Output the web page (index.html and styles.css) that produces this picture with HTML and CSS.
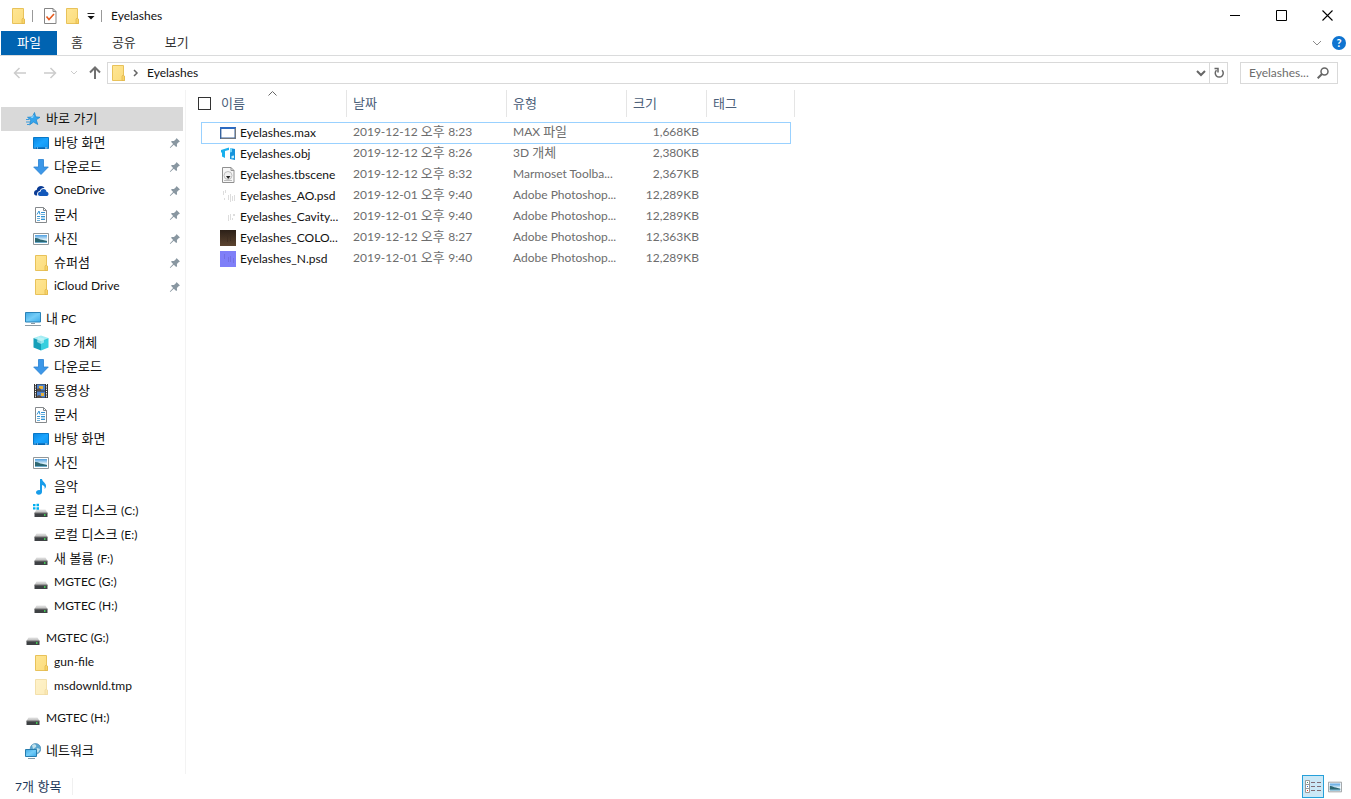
FILE: index.html
```html
<!DOCTYPE html>
<html lang="ko">
<head>
<meta charset="utf-8">
<title>Eyelashes</title>
<link rel="stylesheet" href="styles.css">
</head>
<body>
<svg class="defs" aria-hidden="true">
  <defs>
    <linearGradient id="g-folder" x1="0" y1="0" x2="1" y2="1"><stop offset="0" stop-color="#ffe694"/><stop offset="1" stop-color="#fbdc7c"/></linearGradient>
    <linearGradient id="g-screen" x1="0" y1="0" x2="1" y2="1"><stop offset="0" stop-color="#0c86e0"/><stop offset=".5" stop-color="#1aa5ff"/><stop offset="1" stop-color="#0f93ee"/></linearGradient>
    <linearGradient id="g-pc" x1="0" y1="0" x2="1" y2="1"><stop offset="0" stop-color="#3fa9e4"/><stop offset=".5" stop-color="#74cdf8"/><stop offset="1" stop-color="#3cabea"/></linearGradient>
    <linearGradient id="g-drive" x1="0" y1="0" x2="0" y2="1"><stop offset="0" stop-color="#e6e6e6"/><stop offset="1" stop-color="#b4b4b4"/></linearGradient>
    <linearGradient id="g-brown" x1="0" y1="0" x2="0" y2="1"><stop offset="0" stop-color="#2c2018"/><stop offset="1" stop-color="#5c4430"/></linearGradient>
    <linearGradient id="g-photo" x1="0" y1="0" x2="0" y2="1"><stop offset="0" stop-color="#4f9fe0"/><stop offset=".6" stop-color="#e2f3fa"/><stop offset="1" stop-color="#8fc3dc"/></linearGradient>
  </defs>
  <symbol id="folder" viewBox="0 0 16 16"><path d="M2.500.5h11v10l1 1v4h-12z" fill="url(#g-folder)" stroke="#e8c25a"/><path d="M12 15.500v-4.500l1-1 1.500 1v4.500z" fill="#f8d468" stroke="#dfb54a" stroke-width=".7"/></symbol>
  <symbol id="star" viewBox="0 0 16 16"><path d="M9.500 1.500l1.200 4.300 4.300.5-3.800 2.500 1.600 4.700-4.300-2.400-4 2.800 1.300-4.700L2.500 6.300l4.800-.4z" fill="#35a4ec" stroke="#1683cb" stroke-width=".7"/><path d="M1 8.500h3M1 11h4M2 13.500h2" stroke="#3b9cdc" stroke-width="1"/><path d="M9.200 3.500L8 7 5.500 7z" fill="#8bd4fc"/></symbol>
  <symbol id="desktop" viewBox="0 0 16 16"><path d="M.5 2.500h15v11H.5z" fill="url(#g-screen)" stroke="#0878c8"/><path d="M1 13h14" stroke="#05549a"/><path d="M1.500 13h1M4 13h1M12 13h2.500" stroke="#bfe7ff"/></symbol>
  <symbol id="download" viewBox="0 0 16 16"><path d="M5.500.5h5v7.500h4.800L8 15.500.7 8h4.800z" fill="#3c97e8" stroke="#2680d2" stroke-width=".8"/></symbol>
  <symbol id="onedrive" viewBox="0 0 16 16"><path d="M1 10c0-2 1.400-3 2.700-3C4 4.500 5.800 3 8 3c1.700 0 2.900.8 3.500 2-2.700-.3-4.500 1.200-4.800 3.100C4.500 8.400 3.800 10 4.200 12.500H3C1.800 12.500 1 11.500 1 10z" fill="#0a3b94"/><path d="M5 11c0-1.600 1.200-2.400 2.500-2.300C7.800 6.700 9.100 6 10.500 6c1.600 0 2.700 1 3 2.700 1.300.2 2 1 2 2.200 0 1.300-1 2.100-2.100 2.100H7c-1.200 0-2-.9-2-2z" fill="#1358ba"/></symbol>
  <symbol id="document" viewBox="0 0 16 16"><path d="M2.500.5h8l3 3v12h-11z" fill="#fff" stroke="#85898c"/><path d="M10.500.5v3h3" fill="none" stroke="#85898c"/><path d="M4 7.500l2-3.500 1 3.500M8 5.500h4M4 9.500h3M8 9.500h4M8 12.500h4" stroke="#3495d5" fill="none"/><path d="M4 11.500h3M8 7.500h4M4 13.500h3M8 11h4" stroke="#71b2da" fill="none"/></symbol>
  <symbol id="picture" viewBox="0 0 16 16"><path d="M.5 2.500h15v11H.5z" fill="#fff" stroke="#91979a"/><path d="M2 4h12v8H2z" fill="url(#g-photo)"/><path d="M2 7c3-.5 4 1.500 7 1.700L14 10v1H2z" fill="#2c6772"/><path d="M2 11h12v1H2z" fill="#6caccd"/></symbol>
  <symbol id="pc" viewBox="0 0 16 16"><path d="M.5 1.500h15v9.500H.5z" fill="url(#g-pc)" stroke="#2b83b8"/><path d="M6 12.500h4M0 14.500h16" stroke="#8c9aa4"/></symbol>
  <symbol id="cube" viewBox="0 0 16 16"><path d="M8 .5l7.500 2.500L8 6 .5 3z" fill="#a5edf4"/><path d="M.5 3L8 6v9.500l-7.500-3z" fill="#16a0b9"/><path d="M8 6l7.500-3v9.500l-7.500 3z" fill="#36cfdf"/><path d="M5 2l6 1.500v4L8 9 4 7z" fill="#c8f5f8" opacity=".65"/></symbol>
  <symbol id="video" viewBox="0 0 16 16"><path d="M1 1h14v14H1z" fill="#333"/><path d="M4 1.500h8v6H4zM4 8.500h8v6H4z" fill="#4f83cc"/><path d="M6 3h4v3H6zM8 10h3v3H8z" fill="#e8b23a"/><path d="M4 6l3-1 1 2v1H4zM4 13l2-1 3 2v1H4z" fill="#574d45"/><path d="M2.500 1v14M13.500 1v14" stroke="#fff" stroke-dasharray="1.300 1"/></symbol>
  <symbol id="music" viewBox="0 0 16 16"><path d="M7 0h2c.3 3 4.500 4 4 7.500-.2 1.300-.8 2-1.400 2.600.6-2.500-.6-3.600-2.600-4V13c0 1.500-1.400 2.700-3.200 2.700-1.700 0-2.800-1-2.800-2.200 0-1.600 2-2.800 4-2.300z" fill="#189ce9"/></symbol>
  <symbol id="drive" viewBox="0 0 16 16"><path d="M3.500 6.500h9l2 3.500h-13z" fill="url(#g-drive)"/><path d="M1.500 10h13v4h-13z" fill="#3e4144"/><path d="M1.500 10h13" stroke="#777"/><path d="M11 12h1.500" stroke="#45f05b" stroke-width="1.500"/></symbol>
  <symbol id="windrive" viewBox="0 0 16 16"><use href="#drive"/><path d="M0 1h2.500v2.300H0zM3.500.7H6v2.600H3.500zM0 4.200h2.500v2.300H0zM3.500 4.200H6v2.600H3.500z" fill="#00aeef"/></symbol>
  <symbol id="network" viewBox="0 0 16 16"><circle cx="10.500" cy="5.800" r="5.300" fill="#5ba6cf" stroke="#3c82ad" stroke-width=".6"/><path d="M7 2c3-2 5 0 4 2L8 6zM12 5l3 1-2 4-2-2z" fill="#c2e2ec"/><path d="M.5 6.500h11v7H.5z" fill="url(#g-pc)" stroke="#277cad"/><path d="M3 15.500h7" stroke="#8299a6"/></symbol>
  <symbol id="pin" viewBox="0 0 12 12"><path d="M7.500 1l3.500 3.500-1.100.4-2 2.200.2 2.100-.9.800-2.400-2.300L1.300 11l-.5-.4 3.300-3.700L2 4.700l.9-.8L5 4.100l2.100-2z" fill="#8997a1"/></symbol>
  <symbol id="app" viewBox="0 0 16 16"><path d="M.7 2.700h14.500v10.500H.7z" fill="#fff" stroke="#36639f" stroke-width="1.400"/><path d="M0 2h16v2H0z" fill="#2c6ac1"/><path d="M15.500 3v10.500H1" fill="none" stroke="#72777c"/></symbol>
  <symbol id="obj" viewBox="0 0 16 16"><path d="M1 4l8-2.500V4L5 5v7l-3-1.500V7L1 6z" fill="#1ab0ed"/><path d="M10 2l5 1v11l-5-1z" fill="#1593dc"/><path d="M10 2h2v4l-2 .5z" fill="#71d3f7"/><path d="M11.500 10l2.500-.5V12l-2.500.5z" fill="#bfefff"/></symbol>
  <symbol id="scene" viewBox="0 0 16 16"><path d="M2.500.5h8.500l3 3v12H2.500z" fill="#f7f7f7" stroke="#909090"/><path d="M11 .5v3h3" fill="none" stroke="#909090"/><circle cx="8" cy="8.500" r="4" fill="#f1f1f1" stroke="#bdbdbd"/><path d="M6 9h4.500L8.200 12z" fill="#222"/><path d="M4 13.500h8" stroke="#bbb"/></symbol>
  <symbol id="ao" viewBox="0 0 16 16"><path d="M3.500 3v4M5.500 2v3M8.500 7v5M10.500 6v8M12.500 8v5M14.500 7v6M4.500 10v2" stroke="#ddd"/></symbol>
  <symbol id="cavity" viewBox="0 0 16 16"><path d="M8.500 6v6M10.500 5v6M13.500 5v2M12.500 9v2M14.500 5v2" stroke="#ddd"/></symbol>
  <symbol id="color" viewBox="0 0 16 16"><path d="M0 0h16v16H0z" fill="url(#g-brown)"/><path d="M7.500 6v6M10.500 5v6" stroke="#3b2b20" opacity=".6"/></symbol>
  <symbol id="normal" viewBox="0 0 16 16"><path d="M0 0h16v16H0z" fill="#7f7ff8"/><path d="M4.500 3v5M8.500 6v5M10.500 5v6M13.500 7v5" stroke="#706ada" opacity=".7"/></symbol>
</svg>

<div class="window">
  <header class="titlebar">
    <div class="quick">
      <svg class="icon"><use href="#folder"/></svg>
      <i class="bar"></i>
      <button class="plain" aria-label="속성"><svg class="icon" viewBox="0 0 16 16"><path d="M2.500.5h8.500l3 3v12H2.500z" fill="#fff" stroke="#858585"/><path d="M11 .5v3h3" fill="none" stroke="#858585"/><path d="M4.500 8.500l2.500 3 5-5.500" fill="none" stroke="#e65a1e" stroke-width="1.600"/></svg></button>
      <button class="plain" aria-label="새 폴더"><svg class="icon"><use href="#folder"/></svg></button>
      <button class="plain more" aria-label="사용자 지정"><svg width="8" height="8" viewBox="0 0 8 8"><path d="M.5 1.500h7" stroke="#222"/><path d="M.5 4h7L4 7.500z" fill="#111"/></svg></button>
      <i class="bar"></i>
      <h1 class="title">Eyelashes</h1>
    </div>
    <div class="controls">
      <button class="control" aria-label="최소화"><svg width="11" height="11"><path d="M0 5.500h10" stroke="#000"/></svg></button>
      <button class="control" aria-label="최대화"><svg width="11" height="11"><path d="M.5.5h10v10h-10z" fill="none" stroke="#000"/></svg></button>
      <button class="control" aria-label="닫기"><svg width="11" height="11"><path d="M.5.5l10 10M10.500.5l-10 10" stroke="#000" stroke-width="1.100"/></svg></button>
    </div>
  </header>

  <nav class="ribbon ko">
    <button class="tab tab-file">파일</button>
    <button class="tab">홈</button>
    <button class="tab">공유</button>
    <button class="tab">보기</button>
    <div class="ribbon-end">
      <button class="plain" aria-label="리본 확장"><svg width="10" height="8"><path d="M1 2l4 4 4-4" fill="none" stroke="#8a8a8a"/></svg></button>
      <button class="help" aria-label="도움말">?</button>
    </div>
  </nav>

  <div class="location">
    <button class="plain nav" aria-label="뒤로"><svg width="14" height="12"><path d="M6.500 1l-5 5 5 5M1.500 6H13" fill="none" stroke="#ccc" stroke-width="1.500"/></svg></button>
    <button class="plain nav" aria-label="앞으로"><svg width="14" height="12"><path d="M7.500 1l5 5-5 5M12.500 6H1" fill="none" stroke="#ccc" stroke-width="1.500"/></svg></button>
    <button class="plain recent" aria-label="최근 위치"><svg width="8" height="8"><path d="M1 2l3 3 3-3" fill="none" stroke="#ccc"/></svg></button>
    <button class="plain up" aria-label="위로"><svg width="12" height="14"><path d="M1 6.500l5-5 5 5M6 2v11" fill="none" stroke="#707070" stroke-width="2"/></svg></button>
    <div class="address">
      <svg class="icon"><use href="#folder"/></svg>
      <svg class="crumb-arrow" width="6" height="8"><path d="M1 1l3 3-3 3" fill="none" stroke="#666" stroke-width="1.500"/></svg>
      <a class="crumb" href="#">Eyelashes</a>
      <button class="plain history" aria-label="이전 위치"><svg width="10" height="8"><path d="M1 2l4 4 4-4" fill="none" stroke="#666" stroke-width="2"/></svg></button>
      <button class="plain refresh" aria-label="새로 고침"><svg width="12" height="12" viewBox="0 0 12 12"><path d="M9 3.200A4 4 0 1 1 3.500 3.200" fill="none" stroke="#666" stroke-width="1.500"/><path d="M1.500 1.500H5v4" fill="none" stroke="#666" stroke-width="1.500"/></svg></button>
    </div>
    <div class="search">
      <input class="search-box" type="text" placeholder="Eyelashes..." aria-label="Eyelashes 검색">
      <svg width="12" height="12" viewBox="0 0 12 12"><circle cx="7.500" cy="4.500" r="3.500" fill="none" stroke="#666" stroke-width="1.500"/><path d="M5 7l-4.300 4.300" stroke="#666" stroke-width="2"/></svg>
    </div>
  </div>

  <div class="body">
    <nav class="sidebar">
      <div class="group">
        <a class="node top selected" href="#"><svg class="icon"><use href="#star"/></svg><span class="ko">바로 가기</span></a>
        <a class="node" href="#"><svg class="icon"><use href="#desktop"/></svg><span class="ko">바탕 화면</span><svg class="pin"><use href="#pin"/></svg></a>
        <a class="node" href="#"><svg class="icon"><use href="#download"/></svg><span class="ko">다운로드</span><svg class="pin"><use href="#pin"/></svg></a>
        <a class="node" href="#"><svg class="icon"><use href="#onedrive"/></svg><span>OneDrive</span><svg class="pin"><use href="#pin"/></svg></a>
        <a class="node" href="#"><svg class="icon"><use href="#document"/></svg><span class="ko">문서</span><svg class="pin"><use href="#pin"/></svg></a>
        <a class="node" href="#"><svg class="icon"><use href="#picture"/></svg><span class="ko">사진</span><svg class="pin"><use href="#pin"/></svg></a>
        <a class="node" href="#"><svg class="icon"><use href="#folder"/></svg><span class="ko">슈퍼셤</span><svg class="pin"><use href="#pin"/></svg></a>
        <a class="node" href="#"><svg class="icon"><use href="#folder"/></svg><span>iCloud Drive</span><svg class="pin"><use href="#pin"/></svg></a>
      </div>
      <div class="group">
        <a class="node top" href="#"><svg class="icon"><use href="#pc"/></svg><span><span class="ko">내</span> PC</span></a>
        <a class="node" href="#"><svg class="icon"><use href="#cube"/></svg><span>3D <span class="ko">개체</span></span></a>
        <a class="node" href="#"><svg class="icon"><use href="#download"/></svg><span class="ko">다운로드</span></a>
        <a class="node" href="#"><svg class="icon"><use href="#video"/></svg><span class="ko">동영상</span></a>
        <a class="node" href="#"><svg class="icon"><use href="#document"/></svg><span class="ko">문서</span></a>
        <a class="node" href="#"><svg class="icon"><use href="#desktop"/></svg><span class="ko">바탕 화면</span></a>
        <a class="node" href="#"><svg class="icon"><use href="#picture"/></svg><span class="ko">사진</span></a>
        <a class="node" href="#"><svg class="icon"><use href="#music"/></svg><span class="ko">음악</span></a>
        <a class="node" href="#"><svg class="icon"><use href="#windrive"/></svg><span><span class="ko">로컬 디스크 </span>(C:)</span></a>
        <a class="node" href="#"><svg class="icon"><use href="#drive"/></svg><span><span class="ko">로컬 디스크 </span>(E:)</span></a>
        <a class="node" href="#"><svg class="icon"><use href="#drive"/></svg><span><span class="ko">새 볼륨 </span>(F:)</span></a>
        <a class="node" href="#"><svg class="icon"><use href="#drive"/></svg><span>MGTEC (G:)</span></a>
        <a class="node" href="#"><svg class="icon"><use href="#drive"/></svg><span>MGTEC (H:)</span></a>
      </div>
      <div class="group">
        <a class="node top" href="#"><svg class="icon"><use href="#drive"/></svg><span>MGTEC (G:)</span></a>
        <a class="node" href="#"><svg class="icon"><use href="#folder"/></svg><span>gun-file</span></a>
        <a class="node" href="#"><svg class="icon hidden-folder"><use href="#folder"/></svg><span>msdownld.tmp</span></a>
      </div>
      <div class="group"><a class="node top" href="#"><svg class="icon"><use href="#drive"/></svg><span>MGTEC (H:)</span></a></div>
      <div class="group"><a class="node top" href="#"><svg class="icon"><use href="#network"/></svg><span class="ko">네트워크</span></a></div>
    </nav>

    <main class="content">
      <table class="files">
        <colgroup><col class="c-name"><col class="c-date"><col class="c-type"><col class="c-size"><col class="c-tag"></colgroup>
        <thead>
          <tr class="ko">
            <th><div class="head head-name"><input class="check" type="checkbox" aria-label="모두 선택"><span>이름</span><svg class="sort" width="9" height="5"><path d="M.5 4.500l4-4 4 4" fill="none" stroke="#666"/></svg></div></th>
            <th><div class="head"><span>날짜</span></div></th><th><div class="head"><span>유형</span></div></th><th><div class="head"><span>크기</span></div></th><th><div class="head"><span>태그</span></div></th>
          </tr>
        </thead>
        <tbody>
          <tr class="focused"><td><div class="file"><svg class="icon"><use href="#app"/></svg>Eyelashes.max</div></td><td>2019-12-12 <span class="ko">오후 </span>8:23</td><td>MAX <span class="ko">파일</span></td><td class="size">1,668KB</td><td></td></tr>
          <tr><td><div class="file"><svg class="icon"><use href="#obj"/></svg>Eyelashes.obj</div></td><td>2019-12-12 <span class="ko">오후 </span>8:26</td><td>3D <span class="ko">개체</span></td><td class="size">2,380KB</td><td></td></tr>
          <tr><td><div class="file"><svg class="icon"><use href="#scene"/></svg>Eyelashes.tbscene</div></td><td>2019-12-12 <span class="ko">오후 </span>8:32</td><td>Marmoset Toolba...</td><td class="size">2,367KB</td><td></td></tr>
          <tr><td><div class="file"><svg class="icon"><use href="#ao"/></svg>Eyelashes_AO.psd</div></td><td>2019-12-01 <span class="ko">오후 </span>9:40</td><td>Adobe Photoshop...</td><td class="size">12,289KB</td><td></td></tr>
          <tr><td><div class="file"><svg class="icon"><use href="#cavity"/></svg>Eyelashes_Cavity...</div></td><td>2019-12-01 <span class="ko">오후 </span>9:40</td><td>Adobe Photoshop...</td><td class="size">12,289KB</td><td></td></tr>
          <tr><td><div class="file"><svg class="icon"><use href="#color"/></svg>Eyelashes_COLO...</div></td><td>2019-12-12 <span class="ko">오후 </span>8:27</td><td>Adobe Photoshop...</td><td class="size">12,363KB</td><td></td></tr>
          <tr><td><div class="file"><svg class="icon"><use href="#normal"/></svg>Eyelashes_N.psd</div></td><td>2019-12-01 <span class="ko">오후 </span>9:40</td><td>Adobe Photoshop...</td><td class="size">12,289KB</td><td></td></tr>
        </tbody>
      </table>
    </main>
  </div>

  <footer class="status">
    <span class="count">7<span class="ko">개 항목</span></span>
    <div class="views">
      <button class="view active" aria-label="자세히"><svg width="18" height="16" viewBox="0 0 18 16"><path d="M1.500 1.500h4v12h-4zM1.500 5.500h4M1.500 9.500h4" fill="#fff" stroke="#999"/><path d="M3 3.500h1" stroke="#3f8f70"/><path d="M3 7.500h1" stroke="#2f76df"/><path d="M3 11.500h1" stroke="#e13a22"/><path d="M7 3.500h4M13 3.500h4M7 7.500h4M13 7.500h4M7 11.500h4M13 11.500h4" stroke="#806d75"/></svg></button>
      <button class="view" aria-label="큰 아이콘"><svg width="14" height="14" viewBox="0 0 16 16"><use href="#picture"/></svg></button>
    </div>
  </footer>
</div>
</body>
</html>
```
FILE: styles.css
```css
* { box-sizing: border-box; }

body {
  margin: 0;
  background: #fff;
  color: #111;
  font: 12px/16px Lato, "Noto Sans CJK KR", sans-serif;
}

button, input { font: inherit; color: inherit; }
a { color: inherit; text-decoration: none; }
svg { display: block; flex: none; }

.defs { position: absolute; width: 0; height: 0; }
.ko { font-size: 13px; font-family: "Noto Sans CJK KR", sans-serif; font-weight: 400; }
.icon { width: 16px; height: 16px; }

.window { display: flex; flex-direction: column; min-height: 100vh; }

.plain { display: flex; align-items: center; justify-content: center; padding: 0; border: 0; background: none; }

/* Title bar */
.titlebar { display: flex; justify-content: space-between; height: 31px; }
.quick { display: flex; align-items: center; gap: 6px; padding-left: 10px; }
.bar { width: 1px; height: 12px; margin-right: 3px; background: #999; }
.more { width: 9px; }
.title { margin: 0; font-size: 12px; font-weight: 400; }
.controls { display: flex; padding-right: 1px; }
.control { display: flex; align-items: center; justify-content: center; width: 46px; padding: 0; border: 0; background: none; }

/* Ribbon */
.ribbon { display: flex; height: 25px; padding-left: 1px; border-bottom: 1px solid #dadbdc; }
.tab { padding: 0 14px 2px; border: 0; background: none; color: #333; }
.tab + .tab { margin-right: 1px; }
.tab-file { padding: 0 16px 2px; background: #0063b1; color: #fff; }
.ribbon-end { display: flex; align-items: center; gap: 10px; margin-left: auto; padding-right: 5px; }
.help { width: 14px; height: 14px; padding: 0; border: 0; border-radius: 50%; background: #0f74d0; color: #fff; font: bold 11px/14px Lato, sans-serif; }

/* Address row */
.location { display: flex; align-items: center; height: 34px; padding: 0 13px 0 5px; }
.nav { width: 30px; }
.recent { width: 17px; }
.up { width: 25px; }
.address { display: flex; flex: 1; align-items: center; height: 22px; padding-left: 2px; border: 1px solid #d9d9d9; }
.crumb-arrow { margin: 0 8px 0 7px; }
.crumb { flex: 1; }
.history { width: 16px; height: 20px; }
.refresh { width: 18px; height: 20px; border-left: 1px solid #d9d9d9; }
.search { display: flex; align-items: center; width: 98px; height: 22px; margin-left: 12px; padding: 0 8px; border: 1px solid #d9d9d9; }
.search-box { flex: 1; min-width: 0; padding: 0; border: 0; outline: 0; background: none; }
.search-box::placeholder { color: #6d6d6d; opacity: 1; }

/* Body */
.body { display: flex; flex: 1; }
.sidebar { width: 186px; padding: 17px 2px 3px 1px; border-right: 1px solid #f3f3f3; }
.group { margin-bottom: 8px; }
.node { display: flex; align-items: center; gap: 5px; height: 24px; padding-left: 32px; white-space: nowrap; }
.node > span { padding-bottom: 2px; }
.node.top { padding-left: 24px; }
.selected { background: #d9d9d9; }
.pin { width: 12px; height: 12px; margin-left: auto; margin-right: 2px; }
.hidden-folder { opacity: .5; }

.content { flex: 1; padding-left: 11px; }
.files { table-layout: fixed; width: 598px; border-collapse: collapse; color: #6d6d6d; }
.c-name { width: 150px; }
.c-date { width: 160px; }
.c-type { width: 120px; }
.c-size { width: 80px; }
.c-tag { width: 88px; }
.files th { height: 32px; padding: 0; font-weight: inherit; text-align: left; vertical-align: top; color: #4c607a; }
.head { position: relative; display: flex; align-items: center; height: 27px; padding-left: 6px; border-right: 1px solid #e5e5e5; }
.head > span { padding-bottom: 2px; }
.head-name { gap: 10px; padding-left: 1px; }
.check { appearance: none; width: 13px; height: 13px; margin: 0; border: 1px solid #333; background: #fff; }
.sort { position: absolute; top: 1px; left: 71px; }
.files td { height: 21px; padding: 0 8px 2px 6px; white-space: nowrap; line-height: 16px; }
.files td:first-child { padding: 0 0 0 23px; }
.file { display: flex; align-items: center; gap: 4px; color: #111; }
.files .size { text-align: right; }
.focused { position: relative; }
.focused::after { content: ""; position: absolute; inset: 0 4px -1px; border: 1px solid #99d1ff; pointer-events: none; }

/* Status bar */
.status { display: flex; align-items: center; justify-content: space-between; height: 25px; padding: 0 5px 0 15px; color: #1e395b; }
.count { padding-right: 10px; border-right: 1px solid #f0f0f0; }
.views { display: flex; }
.view { display: flex; align-items: center; justify-content: center; width: 22px; height: 23px; padding: 0; border: 0; background: none; }
.view.active { border: 1px solid #26a0da; background: #cbe8f6; }
```
